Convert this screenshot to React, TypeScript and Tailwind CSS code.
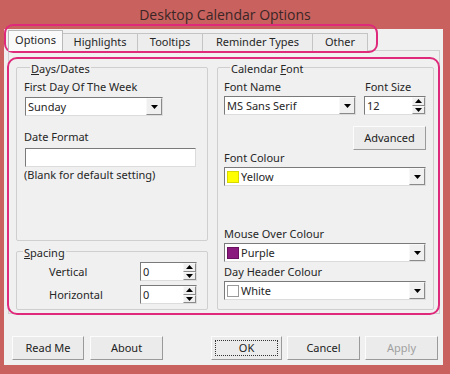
import React from "react";

const FONT = { fontFamily: '"Noto Sans", Tahoma, sans-serif' };

function Arrow({ up = false }: { up?: boolean }) {
  return (
    <svg width="7" height="4" viewBox="0 0 7 4" className="block">
      {up ? <polygon points="0,4 7,4 3.5,0" fill="#000" /> : <polygon points="0,0 7,0 3.5,4" fill="#000" />}
    </svg>
  );
}

function Combo({ w, text, swatch }: { w: string; text: string; swatch?: string }) {
  return (
    <div className={`${w} h-[19px] flex bg-white border border-t-[#7a7a7a] border-l-[#7a7a7a] border-r-[#dcdcdc] border-b-[#dcdcdc]`}>
      <div className="flex-1 flex items-center pl-[2px] gap-[2px] overflow-hidden">
        {swatch && <span className={`w-[12px] h-[12px] border ${swatch}`} />}
        <span className="leading-[12px]">{text}</span>
      </div>
      <div className="w-[16px] h-full flex items-center justify-center bg-[#f0f0f0] border border-t-[#f8f8f8] border-l-[#f8f8f8] border-r-[#8a8a8a] border-b-[#8a8a8a]">
        <Arrow />
      </div>
    </div>
  );
}

function Spin({ w, text }: { w: string; text: string }) {
  return (
    <div className={`${w} h-[19px] flex bg-white border border-t-[#7a7a7a] border-l-[#7a7a7a] border-r-[#dcdcdc] border-b-[#dcdcdc]`}>
      <div className="flex-1 flex items-center pl-[2px]">
        <span className="leading-[12px]">{text}</span>
      </div>
      <div className="w-[13px] h-full flex flex-col">
        <div className="flex-1 flex items-center justify-center bg-[#f0f0f0] border border-t-[#f8f8f8] border-l-[#f8f8f8] border-r-[#8a8a8a] border-b-[#8a8a8a]">
          <Arrow up />
        </div>
        <div className="flex-1 flex items-center justify-center bg-[#f0f0f0] border border-t-[#f8f8f8] border-l-[#f8f8f8] border-r-[#8a8a8a] border-b-[#8a8a8a]">
          <Arrow />
        </div>
      </div>
    </div>
  );
}

function Button({ w, children, disabled, focus }: { w: string; children: React.ReactNode; disabled?: boolean; focus?: boolean }) {
  return (
    <div className={`${w} h-[24px] flex items-center justify-center bg-[#ebebeb] border border-t-[#fcfcfc] border-l-[#fcfcfc] border-r-[#9a9a9a] border-b-[#9a9a9a] ${disabled ? "text-[#a0a0a0]" : "text-[#222]"}`}>
      {focus ? (
        <div className="w-[calc(100%-6px)] h-[calc(100%-6px)] border border-dotted border-[#333] flex items-center justify-center">
          {children}
        </div>
      ) : (
        children
      )}
    </div>
  );
}

function Label({ children, className = "" }: { children: React.ReactNode; className?: string }) {
  return <div className={`leading-[12px] h-[12px] whitespace-nowrap ${className}`}>{children}</div>;
}

function GroupTitle({ children }: { children: React.ReactNode }) {
  return (
    <div className="flex -mt-[5px] h-[12px] pl-[6px]">
      <span className="bg-[#f0f0f0] px-[1px] leading-[12px]">{children}</span>
    </div>
  );
}

const tabs = [
  { t: "Options", w: "w-[55px]", sel: true },
  { t: "Highlights", w: "w-[75px]" },
  { t: "Tooltips", w: "w-[65px]" },
  { t: "Reminder Types", w: "w-[110px]" },
  { t: "Other", w: "w-[55px]" },
];

export default function App() {
  return (
    <div className="relative w-[450px] h-[374px] bg-[#c9625e] overflow-hidden text-[11px] text-[#262626]" style={FONT}>
      <div className="h-[29px] flex items-center justify-center pb-[1px] text-[#3a2626] text-[14px]" style={{ fontFamily: '"Open Sans", sans-serif' }}>
        Desktop Calendar Options
      </div>
      <div className="ml-[4px] mr-[7px] h-[336px] bg-[#f0f0f0] flex flex-col">
        {/* tabs */}
        <div className="h-[21px] mt-[1px] pl-[4px] flex items-end relative z-10">
          {tabs.map((tb) =>
            tb.sel ? (
              <div key={tb.t} className={`${tb.w} h-[21px] flex items-center justify-center pb-[1px] bg-[#fafafa] border border-b-0 border-[#b9b9b9]`}>
                {tb.t}
              </div>
            ) : (
              <div key={tb.t} className={`${tb.w} h-[18px] flex items-center justify-center bg-[#ededed] border border-l-0 border-b-0 border-[#c4c4c4]`}>
                {tb.t}
              </div>
            )
          )}
        </div>
        {/* page */}
        <div className="ml-[4px] w-[432px] h-[264px] -mt-[1px] border border-[#d0d0d0] bg-[#f0f0f0] pt-[16px] pl-[7px] flex gap-[9px]">
          {/* left column */}
          <div className="w-[192px] flex flex-col">
            <div className="h-[174px] border border-[#cfcfcf] rounded-[2px] flex flex-col pl-[7px]">
              <GroupTitle>
                <span className="underline underline-offset-[1px]">D</span>ays/Dates
              </GroupTitle>
              <Label className="mt-[6px]">First Day Of The Week</Label>
              <div className="mt-[4px] pl-[1px]">
                <Combo w="w-[138px]" text="Sunday" />
              </div>
              <Label className="mt-[15px]">Date Format</Label>
              <div className="mt-[5px] pl-[1px]">
                <div className="w-[171px] h-[19px] bg-white border border-t-[#7a7a7a] border-l-[#7a7a7a] border-r-[#dcdcdc] border-b-[#dcdcdc]" />
              </div>
              <Label className="mt-[2px]">(Blank for default setting)</Label>
            </div>
            <div className="mt-[10px] h-[59px] border border-[#cfcfcf] rounded-[2px] flex flex-col">
              <GroupTitle>
                <span className="underline underline-offset-[1px]">S</span>pacing
              </GroupTitle>
              <div className="mt-[3px] flex items-center h-[19px]">
                <Label className="w-[123px] pl-[32px]">Vertical</Label>
                <Spin w="w-[57px]" text="0" />
              </div>
              <div className="mt-[4px] flex items-center h-[19px]">
                <Label className="w-[123px] pl-[32px]">Horizontal</Label>
                <Spin w="w-[57px]" text="0" />
              </div>
            </div>
          </div>
          {/* right column */}
          <div className="w-[217px] h-[243px] border border-[#cfcfcf] rounded-[2px] flex flex-col pl-[6px] pr-[7px]">
            <GroupTitle>
              Calendar <span className="underline underline-offset-[1px]">F</span>ont
            </GroupTitle>
            <div className="mt-[6px] flex">
              <Label className="w-[141px]">Font Name</Label>
              <Label>Font Size</Label>
            </div>
            <div className="mt-[3px] flex justify-between">
              <Combo w="w-[132px]" text="MS Sans Serif" />
              <Spin w="w-[62px]" text="12" />
            </div>
            <div className="mt-[11px] flex justify-end">
              <Button w="w-[73px]">Advanced</Button>
            </div>
            <Label className="mt-[2px]">Font Colour</Label>
            <div className="mt-[3px]">
              <Combo w="w-[202px]" text="Yellow" swatch="bg-[#ffff00] border-[#d8d800]" />
            </div>
            <Label className="mt-[42px]">Mouse Over Colour</Label>
            <div className="mt-[3px]">
              <Combo w="w-[202px]" text="Purple" swatch="bg-[#8b1a7e] border-[#6a1060]" />
            </div>
            <Label className="mt-[4px]">Day Header Colour</Label>
            <div className="mt-[3px]">
              <Combo w="w-[202px]" text="White" swatch="bg-white border-[#9a9a9a]" />
            </div>
          </div>
        </div>
        {/* buttons */}
        <div className="mt-[22px] flex justify-between pl-[8px] pr-[5px]">
          <div className="flex gap-[6px]">
            <Button w="w-[72px]">Read Me</Button>
            <Button w="w-[73px]">About</Button>
          </div>
          <div className="flex gap-[5px]">
            <Button w="w-[71px]" focus>OK</Button>
            <Button w="w-[73px]">Cancel</Button>
            <Button w="w-[73px]" disabled>Apply</Button>
          </div>
        </div>
      </div>
      {/* pink annotation outlines */}
      <div className="absolute left-[4px] top-[24px] w-[374px] h-[29px] border-2 border-[#df2a7c] rounded-[9px] pointer-events-none" />
      <div className="absolute left-[7px] top-[57px] w-[433px] h-[258px] border-2 border-[#df2a7c] rounded-[10px] pointer-events-none" />
    </div>
  );
}
